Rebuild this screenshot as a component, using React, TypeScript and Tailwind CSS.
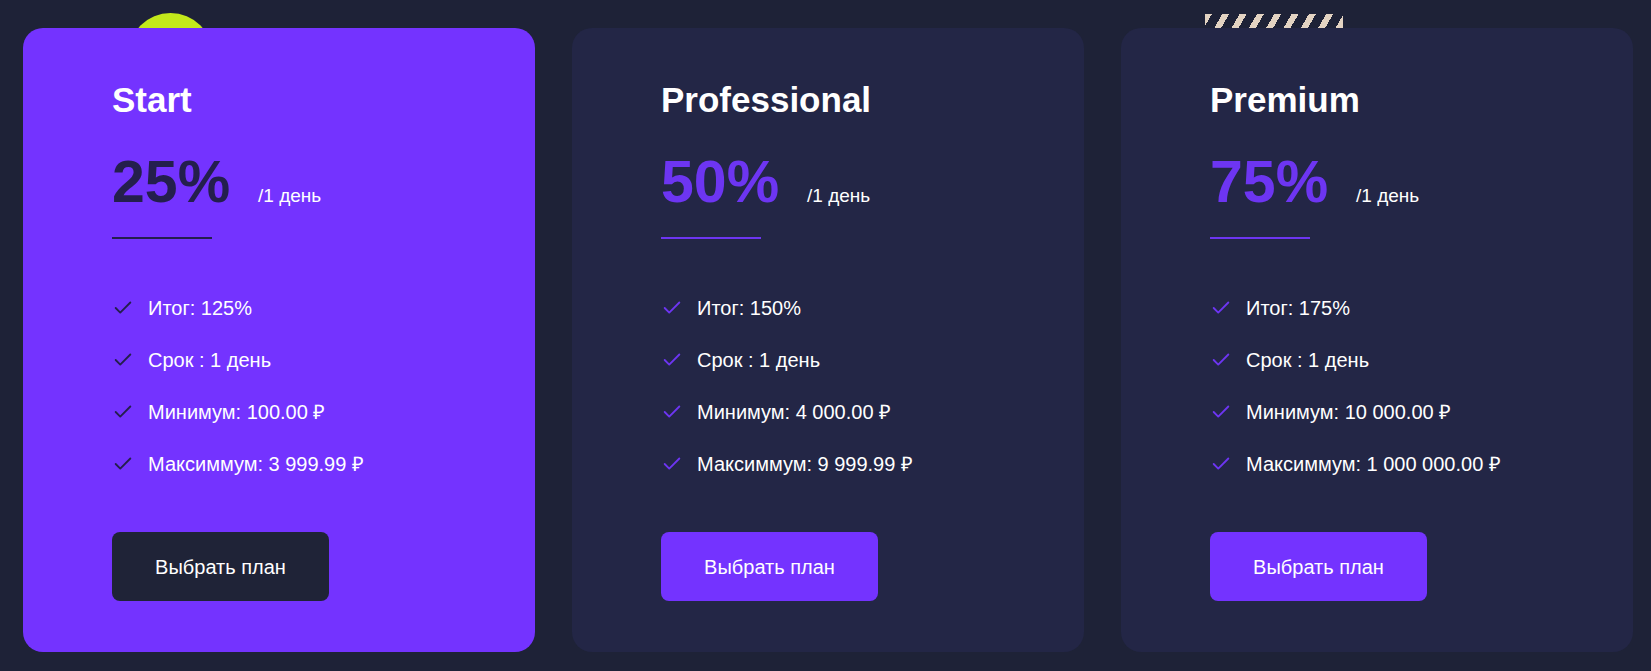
import { Check } from "lucide-react";

type Plan = {
  name: string;
  percent: string;
  total: string;
  min: string;
  max: string;
  active?: boolean;
};

const plans: Plan[] = [
  { name: "Start", percent: "25%", total: "125%", min: "100.00", max: "3 999.99", active: true },
  { name: "Professional", percent: "50%", total: "150%", min: "4 000.00", max: "9 999.99" },
  { name: "Premium", percent: "75%", total: "175%", min: "10 000.00", max: "1 000 000.00" },
];

function PlanCard({ plan }: { plan: Plan }) {
  const accent = plan.active ? "text-[#241f4d]" : "text-[#6d35f2]";
  const line = plan.active ? "bg-[#241f4d]" : "bg-[#6d35f2]";
  const items = [
    `Итог: ${plan.total}`,
    "Срок : 1 день",
    `Минимум: ${plan.min} ₽`,
    `Максиммум: ${plan.max} ₽`,
  ];

  return (
    <div
      className={`relative z-10 flex h-[624px] w-[512px] shrink-0 flex-col rounded-[20px] pl-[89px] pt-[54px] ${
        plan.active ? "bg-[#7433ff]" : "bg-[#232646]"
      }`}
    >
      <span className="text-[35px] font-bold leading-none text-white">{plan.name}</span>
      <div className="mt-[36px] flex items-baseline">
        <span className={`text-[59px] font-bold leading-none ${accent}`}>{plan.percent}</span>
        <span className="ml-[28px] text-[19px] leading-none text-white">/1 день</span>
      </div>
      <div className={`mt-[25px] h-[2px] w-[100px] ${line}`} />
      <ul className="mt-[57px] flex flex-col gap-[28px]">
        {items.map((item) => (
          <li key={item} className="flex h-[24px] items-center gap-[14px] text-[20px] text-white">
            <Check size={22} strokeWidth={2} className={accent} />
            <span>{item}</span>
          </li>
        ))}
      </ul>
      <button
        className={`mt-[56px] flex h-[69px] w-[217px] items-center justify-center rounded-[8px] text-[20px] text-white ${
          plan.active ? "bg-[#1f2337]" : "bg-[#7433ff]"
        }`}
      >
        Выбрать план
      </button>
    </div>
  );
}

export default function App() {
  return (
    <div
      className="relative h-[671px] w-full overflow-hidden bg-[#1e2237]"
      style={{ fontFamily: '"Liberation Sans", Arial, sans-serif' }}
    >
      {/* decorations peeking behind the cards */}
      <div className="absolute left-[128px] top-[13px] h-[85px] w-[85px] rounded-full bg-[#c3e81b]" />
      <div className="absolute left-[1205px] top-[14px] h-[16px] w-[138px] bg-[repeating-linear-gradient(120deg,#e3d3c2_0px,#e3d3c2_6px,transparent_6px,transparent_15px)]" />
      <div className="flex gap-[37px] pl-[23px] pt-[28px]">
        {plans.map((p) => (
          <PlanCard key={p.name} plan={p} />
        ))}
      </div>
    </div>
  );
}
